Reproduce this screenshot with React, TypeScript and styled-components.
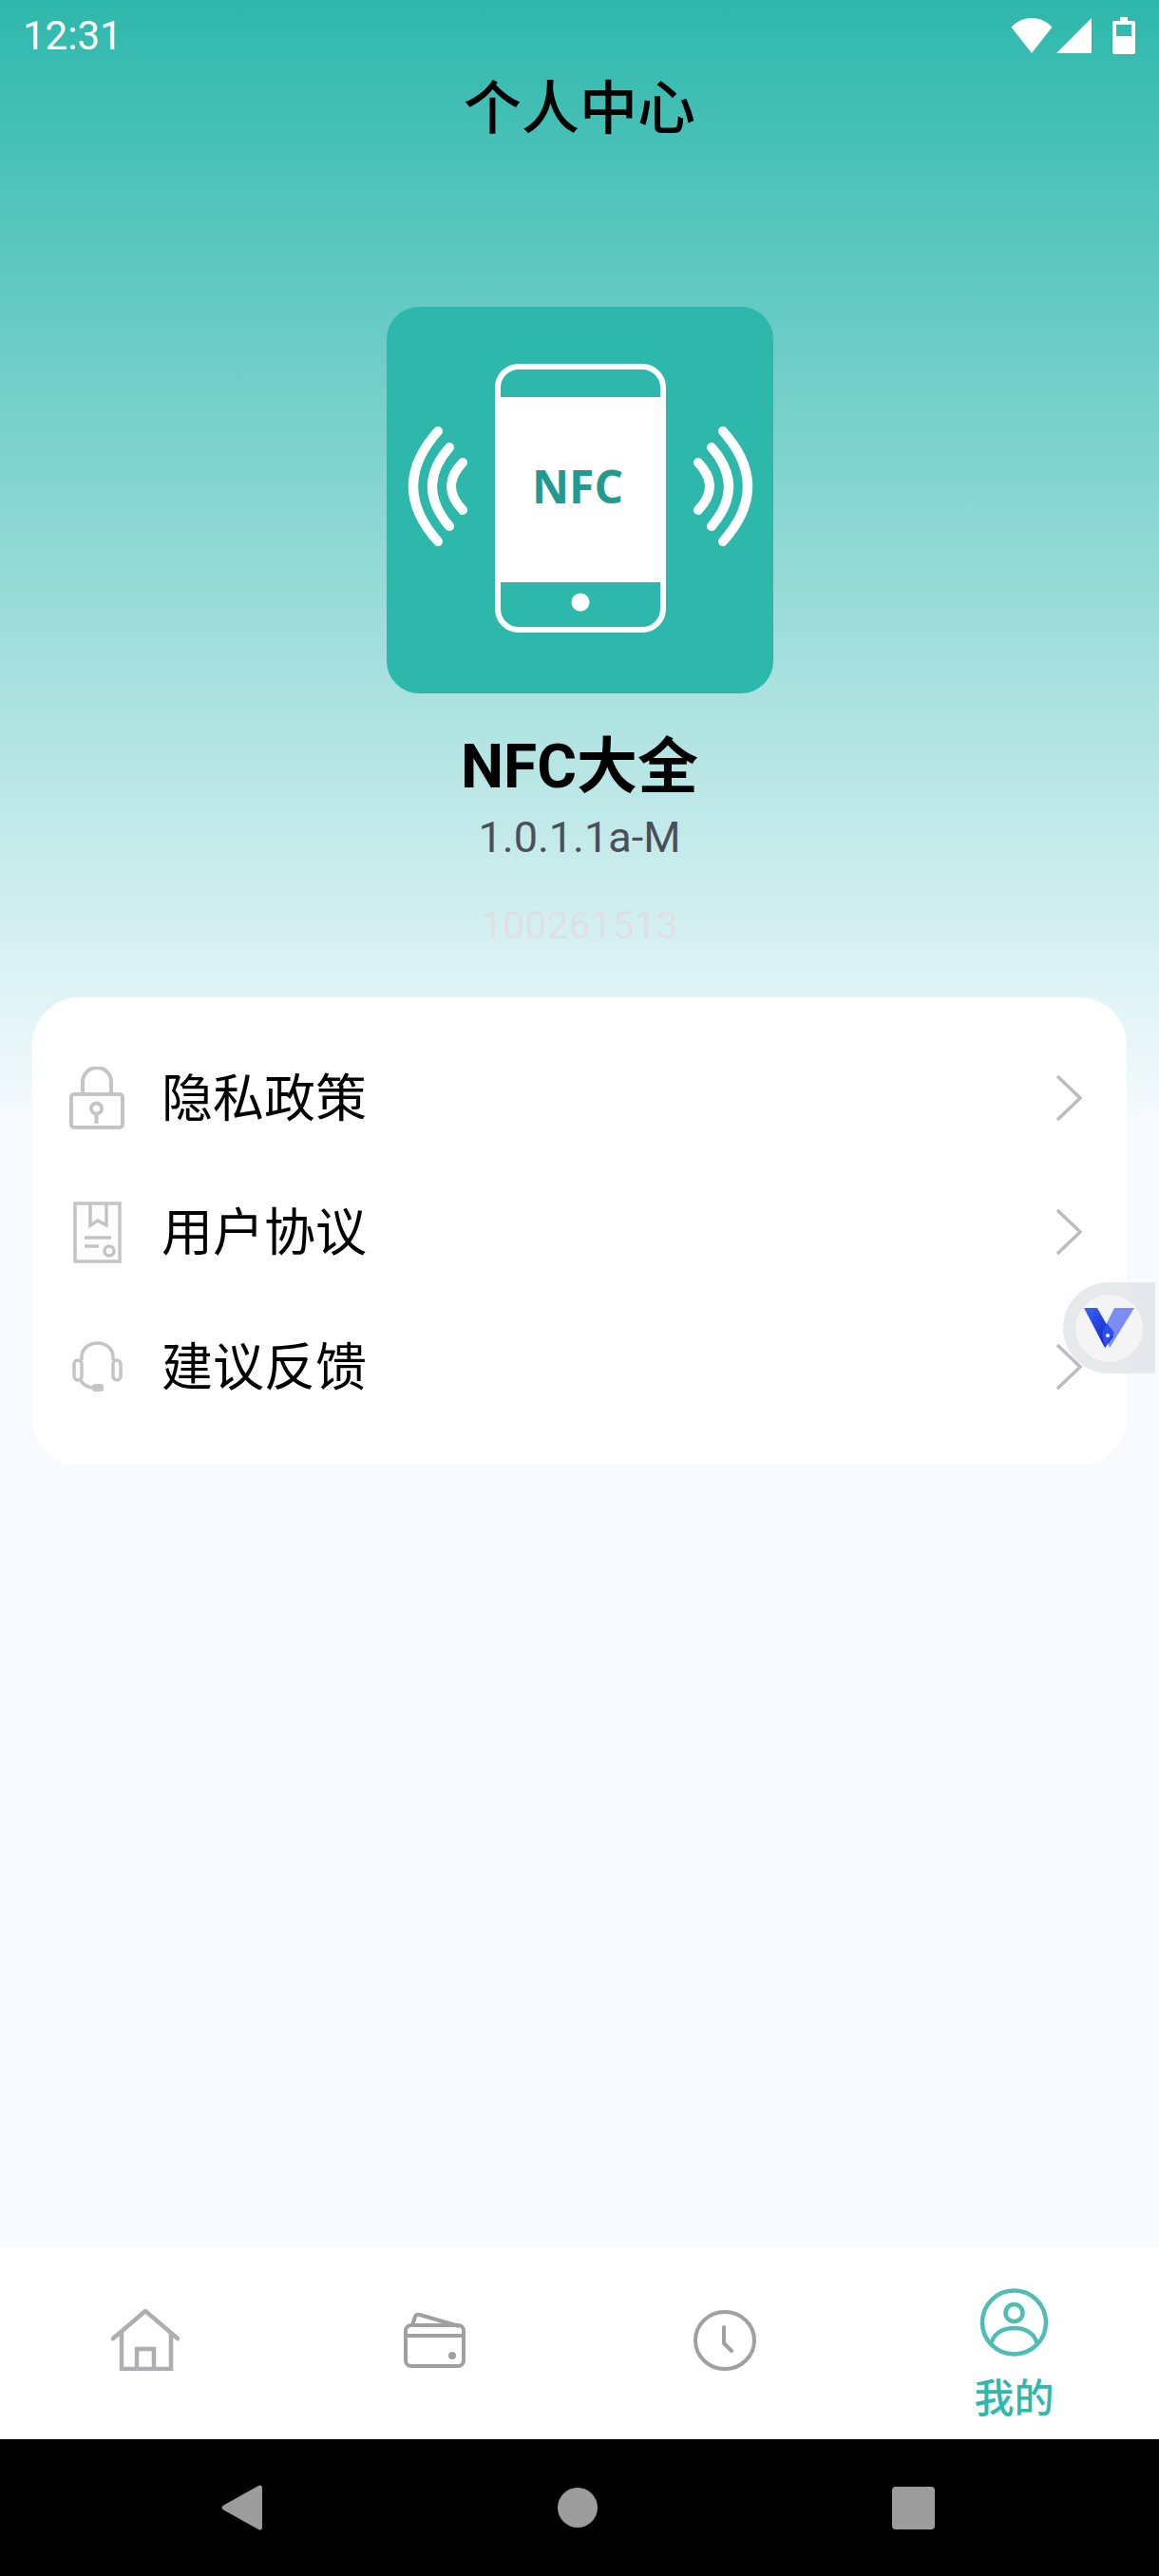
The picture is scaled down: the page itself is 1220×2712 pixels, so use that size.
import React from 'react';
import styled, { createGlobalStyle } from 'styled-components';

const GlobalStyle = createGlobalStyle`
  html, body {
    margin: 0;
    padding: 0;
    background: #f7fbff;
    font-family: Roboto, "Noto Sans CJK SC", sans-serif;
  }
`;

const Page = styled.div`
  position: relative;
  display: flex;
  flex-direction: column;
  width: 1220px;
  height: 2712px;
  overflow: hidden;
  background: linear-gradient(#2eb8ac 0, #f7fbff 1185px);
`;

const StatusBar = styled.div`
  display: flex;
  justify-content: space-between;
  align-items: center;
  height: 75px;
  padding: 0 25px 0 24px;
  color: #fff;
`;

const Time = styled.span`
  font-size: 42px;
  line-height: 75px;
`;

const StatusIcons = styled.div`
  display: flex;
  align-items: center;
  gap: 4px;

  svg:last-child {
    margin-left: 18px;
  }
`;

const Title = styled.h1`
  margin: -3px 0 0;
  text-align: center;
  font-family: "Noto Sans CJK SC", sans-serif;
  font-size: 61px;
  font-weight: 500;
  line-height: 75px;
  color: #000;
`;

const Profile = styled.div`
  display: flex;
  flex-direction: column;
  align-items: center;
  margin-top: 176px;
`;

const Logo = styled.svg`
  display: block;
  width: 407px;
  height: 407px;
`;

const AppName = styled.div`
  margin-top: 36px;
  font-size: 64px;
  font-weight: 700;
  line-height: 84px;
  color: #000;
`;

const Version = styled.div`
  margin-top: 7px;
  font-size: 45px;
  line-height: 50px;
  color: #4c4f5a;
`;

const BuildId = styled.div`
  margin-top: 42px;
  font-size: 41px;
  line-height: 50px;
  color: #dfdfe6;
`;

const Card = styled.div`
  margin: 51px 34px 0 34px;
  padding: 35px 0 33px;
  border-radius: 50px;
  background: #fff;
`;

const Row = styled.div`
  display: flex;
  align-items: center;
  height: 141.5px;
  padding: 0 47px 0 34px;
`;

const RowIcon = styled.div`
  display: flex;
  justify-content: center;
  align-items: center;
  flex: none;
  width: 68px;
`;

const RowLabel = styled.span`
  flex: 1;
  margin: 0 0 6px 34px;
  font-family: "Noto Sans CJK SC", sans-serif;
  font-size: 54px;
  line-height: 70px;
  color: #000;
`;

const Spacer = styled.div`
  flex: 1;
`;

const TabBar = styled.div`
  display: grid;
  grid-template-columns: repeat(4, 1fr);
  height: 203px;
  background: #fff;
`;

const Tab = styled.div<{ $active?: boolean }>`
  display: flex;
  flex-direction: column;
  align-items: center;
  justify-content: ${(p) => (p.$active ? 'flex-start' : 'center')};
  padding-top: ${(p) => (p.$active ? '44px' : '0')};
  padding-bottom: ${(p) => (p.$active ? '0' : '6px')};
`;

const TabLabel = styled.span`
  margin-top: 17px;
  font-family: "Noto Sans CJK SC", sans-serif;
  font-size: 42px;
  font-weight: 500;
  line-height: 48px;
  color: #2fb8ab;
`;

const NavBar = styled.div`
  display: flex;
  justify-content: space-between;
  align-items: center;
  height: 144px;
  padding: 0 236px 0 233px;
  background: #000;
`;

const NavDot = styled.div`
  width: 42px;
  height: 42px;
  border-radius: 50%;
  background: #9c9c9c;
`;

const NavSquare = styled.div`
  width: 45px;
  height: 45px;
  border-radius: 4px;
  background: #9c9c9c;
`;

const FloatTab = styled.div`
  position: absolute;
  top: 1350px;
  right: 4px;
  display: flex;
  align-items: center;
  width: 97px;
  height: 96px;
  padding-left: 11px;
  box-sizing: border-box;
  border-radius: 48px 0 0 48px;
  background: rgba(222, 224, 228, 0.72);
`;

const FloatCircle = styled.div`
  display: flex;
  justify-content: center;
  align-items: center;
  width: 75px;
  height: 75px;
  box-sizing: border-box;
  border: 2px solid #e7e7e7;
  border-radius: 50%;
  background: #f4f4f4;
`;

const Chevron = () => (
  <svg width="27" height="48" viewBox="0 0 27 48" fill="none">
    <path d="M1 1 L25 24 L1 47" stroke="#bcbcbc" strokeWidth="3.5" />
  </svg>
);

const menu = [
  {
    label: '隐私政策',
    icon: (
      <svg width="58" height="66" viewBox="0 0 58 66" fill="none" stroke="#c4c4c4" strokeWidth="4">
        <rect x="2" y="29" width="54" height="35" rx="3" />
        <path d="M14 28 V16 a15 15 0 0 1 30 0 V28" />
        <circle cx="28.500" cy="44" r="5.500" />
        <path d="M28.500 49 V60" />
      </svg>
    ),
  },
  {
    label: '用户协议',
    icon: (
      <svg width="51" height="65" viewBox="0 0 51 65" fill="none" stroke="#c4c4c4" strokeWidth="3.5">
        <rect x="2" y="2" width="47" height="61" />
        <path d="M18 2 V25 L26 20 L35 25 V2" />
        <path d="M12 38 H40 M12 47 H27" />
        <circle cx="38" cy="52" r="5" />
      </svg>
    ),
  },
  {
    label: '建议反馈',
    icon: (
      <svg width="53" height="53" viewBox="0 0 53 53" fill="none" stroke="#c4c4c4" strokeWidth="3.5">
        <path d="M10 20 V16 a16.500 14 0 0 1 33 0 V20" />
        <rect x="2" y="20" width="8" height="21" rx="4" />
        <rect x="43" y="20" width="8" height="21" rx="4" />
        <path d="M9 41 C11 46 15 48 22 49" />
        <rect x="21" y="45" width="12" height="8" rx="3" fill="#c4c4c4" stroke="none" />
      </svg>
    ),
  },
];

export default function App() {
  return (
    <Page>
      <GlobalStyle />
      <StatusBar>
        <Time>12:31</Time>
        <StatusIcons>
          <svg width="44" height="37" viewBox="0 0 44 37" fill="#fff">
            <path d="M22 37 L0.500 9.500 C6 4 13 0 22 0 C31 0 38 4 43.500 9.500 Z" />
          </svg>
          <svg width="37" height="37" viewBox="0 0 37 37" fill="#fff">
            <path d="M37 0 V37 H0 Z" />
          </svg>
          <svg width="24" height="39" viewBox="0 0 24 39" fill="#fff">
            <path
              fillRule="evenodd"
              d="M8 0 H16 V4 H22 Q24 4 24 6 V37 Q24 39 22 39 H2 Q0 39 0 37 V6 Q0 4 2 4 H8 Z M4 8 V20 H20 V8 Z"
            />
          </svg>
        </StatusIcons>
      </StatusBar>

      <Title>个人中心</Title>

      <Profile>
        <Logo viewBox="0 0 407 407">
          <rect width="407" height="407" rx="34" fill="#2eb8ac" />
          <rect x="117" y="63" width="174" height="277" rx="22" fill="none" stroke="#fff" strokeWidth="6" />
          <rect x="117" y="95" width="174" height="195" fill="#fff" />
          <circle cx="204" cy="311" r="9.500" fill="#fff" />
          <text
            x="201"
            y="207"
            textAnchor="middle"
            fontFamily="'Open Sans', sans-serif"
            fontSize="48"
            fontWeight="700"
            fill="#239a90"
          >
            NFC
          </text>
          <g fill="none" stroke="#fff" strokeWidth="10" strokeLinecap="round">
            <path d="M54 131 Q2 189 54 247" />
            <path d="M66 148 Q30 189 66 231" />
            <path d="M80 164 Q56 189 80 214" />
            <path d="M354 131 Q406 189 354 247" />
            <path d="M342 148 Q378 189 342 231" />
            <path d="M328 164 Q352 189 328 214" />
          </g>
        </Logo>
        <AppName>NFC大全</AppName>
        <Version>1.0.1.1a-M</Version>
        <BuildId>100261513</BuildId>
      </Profile>

      <Card>
        {menu.map((item) => (
          <Row key={item.label}>
            <RowIcon>{item.icon}</RowIcon>
            <RowLabel>{item.label}</RowLabel>
            <Chevron />
          </Row>
        ))}
      </Card>

      <Spacer />

      <TabBar>
        <Tab>
          <svg width="72" height="65" viewBox="0 0 72 65" fill="none" stroke="#aeaeb2" strokeWidth="4.500">
            <path d="M2 31 L36 2 L70 31" strokeLinecap="round" />
            <path d="M11 24 V63 H63 V24" />
            <path d="M27 63 V42 H45 V63" />
          </svg>
        </Tab>
        <Tab>
          <svg width="65" height="59" viewBox="0 0 65 59" fill="none" stroke="#a0a0a0" strokeWidth="4">
            <rect x="2" y="14" width="61" height="43" rx="6" />
            <path d="M2 25 H63" />
            <path d="M9 14 L12 5 Q13 2 17 3 L58 15" />
            <ellipse cx="51" cy="46" rx="4" ry="4" fill="#a0a0a0" stroke="none" />
          </svg>
        </Tab>
        <Tab>
          <svg width="66" height="64" viewBox="0 0 66 64" fill="none" stroke="#a0a0a0" strokeWidth="4">
            <ellipse cx="33" cy="32" rx="31" ry="30" />
            <path d="M32 18 V35 L40 43" strokeLinecap="round" strokeLinejoin="round" />
          </svg>
        </Tab>
        <Tab $active>
          <svg width="73" height="72" viewBox="0 0 73 72" fill="none" stroke="#4fbdb3" strokeWidth="4.500">
            <circle cx="36.500" cy="36" r="33.500" />
            <circle cx="36.500" cy="26" r="9" />
            <path d="M12 60 C14 48 24 42 36.500 42 C49 42 59 48 61 60" />
          </svg>
          <TabLabel>我的</TabLabel>
        </Tab>
      </TabBar>

      <NavBar>
        <svg width="43" height="48" viewBox="0 0 43 48" fill="#9c9c9c">
          <path d="M40 0.500 Q43 0 43 3 V45 Q43 48 40 47.500 L1.500 26 Q0 24 1.500 22 Z" />
        </svg>
        <NavDot />
        <NavSquare />
      </NavBar>

      <FloatTab>
        <FloatCircle>
          <svg width="53" height="42" viewBox="0 0 53 42">
            <defs>
              <linearGradient id="vLeft" x1="0" y1="0" x2="0.700" y2="1">
                <stop offset="0" stopColor="#3f66f2" />
                <stop offset="1" stopColor="#0b1fd0" />
              </linearGradient>
            </defs>
            <path d="M53 0 H32 L20 24 L27 42 Z" fill="#7c8cf5" />
            <path d="M0 0 H14 L31 30 L22 42 Z" fill="url(#vLeft)" />
            <path d="M24 16 L32 26 L22 42 L19 26 Z" fill="#2d50ec" />
            <circle cx="25" cy="29" r="2" fill="#fff" />
          </svg>
        </FloatCircle>
      </FloatTab>
    </Page>
  );
}
